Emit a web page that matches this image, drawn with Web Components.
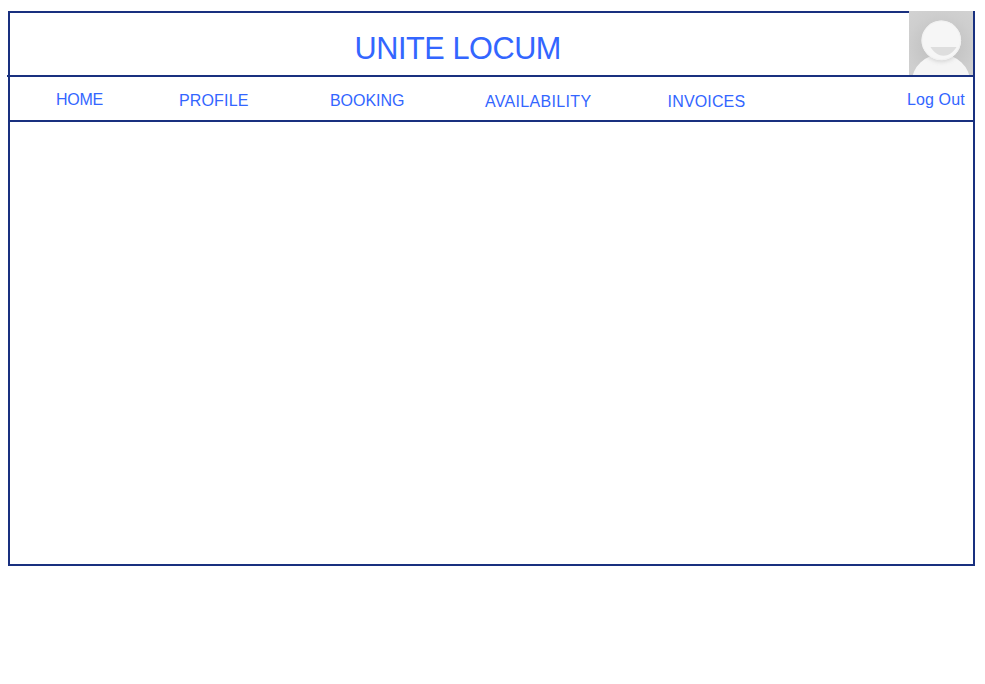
<!DOCTYPE html>
<html lang="en">
<head>
<meta charset="utf-8">
<title>Unite Locum</title>
<style>
body { margin: 0; padding: 11px 0 0 8px; background: #fff; font-family: "Liberation Sans", Arial, sans-serif; color: #3366ff; }
</style>
</head>
<body>
<locum-page>
  <locum-header>UNITE LOCUM</locum-header>
  <locum-nav>
    <nav-link style="--w:123px;--track:-.3px">HOME</nav-link>
    <nav-link style="--w:151px;--drop:1px;--track:.15px">PROFILE</nav-link>
    <nav-link style="--w:155px;--drop:1px;--track:-.05px">BOOKING</nav-link>
    <nav-link style="--w:182.6px;--drop:2px;--track:.32px">AVAILABILITY</nav-link>
    <nav-link style="--w:239.4px;--drop:2px;--track:.15px">INVOICES</nav-link>
    <nav-link style="--w:66px;--track:.12px">Log Out</nav-link>
  </locum-nav>
</locum-page>
<script>
function define(name, html) {
  customElements.define(name, class extends HTMLElement {
    constructor() {
      super();
      this.attachShadow({ mode: 'open' }).innerHTML = html;
    }
  });
}

define('locum-page', `
<style>
:host { display: block; box-sizing: border-box; width: 967px; height: 555px; border: 2px solid #19307f; border-top: 0; }
</style><slot></slot>`);

define('user-avatar', `
<style>:host { display: block; width: 64px; height: 64px; } svg { display: block; }</style>
<svg width="64" height="64" viewBox="0 0 64 64" aria-hidden="true">
  <defs>
    <radialGradient id="bg" cx="32" cy="36" r="44" gradientUnits="userSpaceOnUse">
      <stop offset=".4" stop-color="#c5c5c5"/><stop offset=".75" stop-color="#cecece"/><stop offset="1" stop-color="#d1d1d1"/>
    </radialGradient>
    <filter id="soft" x="-30%" y="-30%" width="160%" height="160%"><feGaussianBlur stdDeviation="2"/></filter>
    <clipPath id="body"><ellipse cx="32" cy="70.5" rx="29" ry="27"/></clipPath>
  </defs>
  <rect width="64" height="64" fill="url(#bg)"/>
  <ellipse cx="32" cy="70.5" rx="29" ry="27" fill="#f5f5f5"/>
  <g clip-path="url(#body)"><circle cx="32.3" cy="30.5" r="20" fill="#999" opacity=".4" filter="url(#soft)"/></g>
  <circle cx="32.3" cy="29.4" r="19.8" fill="#f6f6f6"/>
  <circle cx="32.3" cy="29.4" r="19.3" fill="none" stroke="#f1f1f1"/>
  <path d="M21.5 36H47.5C44 41.8 39.5 44.7 34.5 44.7S25 41.8 21.5 36Z" fill="#dedede"/>
</svg>`);

define('locum-header', `
<style>
:host { display: flex; box-sizing: border-box; height: 66px; margin-left: -3px; padding-left: 3px; border-bottom: 2px solid #19307f; }
.bar { flex: 1; box-sizing: border-box; margin-left: -2px; padding: 18px 0 0 344.5px; border-top: 2px solid #19307f; border-left: 2px solid #19307f; }
h1 { margin: 0; font-size: 30.67px; line-height: 34px; font-weight: 400; white-space: nowrap; letter-spacing: -.43px; }
</style>
<div class="bar"><h1><slot></slot></h1></div>
<user-avatar></user-avatar>`);

define('locum-nav', `
<style>
:host { display: flex; box-sizing: border-box; height: 45px; padding-left: 46px; border-bottom: 2px solid #19307f; font-size: 16px; }
</style><slot></slot>`);

define('nav-link', `
<style>
:host { display: block; flex: 0 0 var(--w); box-sizing: border-box; padding-top: calc(14px + var(--drop, 0px)); line-height: 18px; white-space: nowrap; letter-spacing: var(--track, 0); }
</style><slot></slot>`);
</script>
</body>
</html>
